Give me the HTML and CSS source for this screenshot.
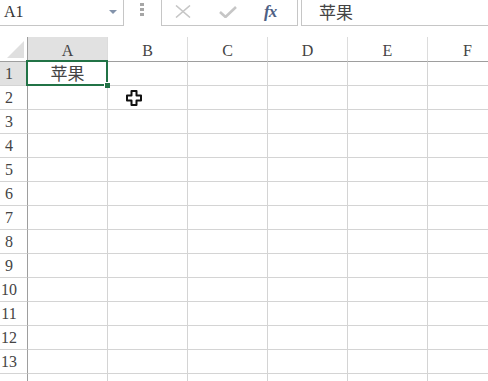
FILE: index.html
```html
<!DOCTYPE html>
<html lang="zh-CN">
  <head>
    <meta charset="UTF-8" />
    <meta name="viewport" content="width=device-width, initial-scale=1.0" />
    <title>Sheet</title>
    <link rel="stylesheet" href="styles.css">
  </head>
  <body>
    <div class="toolbar">
      <div class="namebox">
        <span>A1</span>
        <span class="drop"></span>
      </div>
      <div class="grip">
        <i></i><i></i><i></i>
      </div>
      <div class="fbtns">
        <svg class="ico-x" width="16" height="13" viewBox="0 0 16 13">
          <path d="M1 0.5 L15 12.5 M15 0.5 L1 12.5" stroke="#c6c6c6" stroke-width="1.6" fill="none" />
        </svg>
        <svg class="ico-ok" width="18" height="12" viewBox="0 0 18 12">
          <path d="M1 6 L6.5 11 L17 1" stroke="#c6c6c6" stroke-width="2.6" fill="none" />
        </svg>
        <span class="fx">fx</span>
      </div>
      <div class="finput">苹果</div>
    </div>

    <div class="sheet">
      <div class="corner">
        <svg width="17" height="17" viewBox="0 0 17 17"><path d="M17 0 L17 17 L0 17 Z" fill="#dfdfdf" /></svg>
      </div>
      <div class="colhead on">A</div>
      <div class="colhead">B</div>
      <div class="colhead">C</div>
      <div class="colhead">D</div>
      <div class="colhead">E</div>
      <div class="colhead">F</div>

      <div class="rowhead on">1</div>
      <div class="cell active">苹果<span class="handle"></span></div>
      <div class="cell"></div><div class="cell"></div><div class="cell"></div><div class="cell"></div><div class="cell"></div>

      <div class="rowhead">2</div>
      <div class="cell"></div><div class="cell"></div><div class="cell"></div><div class="cell"></div><div class="cell"></div><div class="cell"></div>
      <div class="rowhead">3</div>
      <div class="cell"></div><div class="cell"></div><div class="cell"></div><div class="cell"></div><div class="cell"></div><div class="cell"></div>
      <div class="rowhead">4</div>
      <div class="cell"></div><div class="cell"></div><div class="cell"></div><div class="cell"></div><div class="cell"></div><div class="cell"></div>
      <div class="rowhead">5</div>
      <div class="cell"></div><div class="cell"></div><div class="cell"></div><div class="cell"></div><div class="cell"></div><div class="cell"></div>
      <div class="rowhead">6</div>
      <div class="cell"></div><div class="cell"></div><div class="cell"></div><div class="cell"></div><div class="cell"></div><div class="cell"></div>
      <div class="rowhead">7</div>
      <div class="cell"></div><div class="cell"></div><div class="cell"></div><div class="cell"></div><div class="cell"></div><div class="cell"></div>
      <div class="rowhead">8</div>
      <div class="cell"></div><div class="cell"></div><div class="cell"></div><div class="cell"></div><div class="cell"></div><div class="cell"></div>
      <div class="rowhead">9</div>
      <div class="cell"></div><div class="cell"></div><div class="cell"></div><div class="cell"></div><div class="cell"></div><div class="cell"></div>
      <div class="rowhead">10</div>
      <div class="cell"></div><div class="cell"></div><div class="cell"></div><div class="cell"></div><div class="cell"></div><div class="cell"></div>
      <div class="rowhead">11</div>
      <div class="cell"></div><div class="cell"></div><div class="cell"></div><div class="cell"></div><div class="cell"></div><div class="cell"></div>
      <div class="rowhead">12</div>
      <div class="cell"></div><div class="cell"></div><div class="cell"></div><div class="cell"></div><div class="cell"></div><div class="cell"></div>
      <div class="rowhead">13</div>
      <div class="cell"></div><div class="cell"></div><div class="cell"></div><div class="cell"></div><div class="cell"></div><div class="cell"></div>
      <!-- row 14 is cut off by the window edge -->
      <div class="rowhead"></div>
      <div class="cell"></div><div class="cell"></div><div class="cell"></div><div class="cell"></div><div class="cell"></div><div class="cell"></div>
    </div>

    <!-- mouse pointer over the sheet -->
    <svg class="pointer" width="16" height="16" viewBox="0 0 16 16">
      <path d="M5.5 1 H10.5 V5.5 H15 V10.5 H10.5 V15 H5.5 V10.5 H1 V5.5 H5.5 Z" fill="#fff" stroke="#111" stroke-width="2" stroke-linejoin="round" />
    </svg>
  </body>
</html>
```

FILE: styles.css
```css
* {
  margin: 0;
  padding: 0;
  box-sizing: border-box;
}
body {
  width: 488px;
  height: 381px;
  overflow: hidden;
  background: #fff;
  font-family: "Liberation Serif", "Noto Sans CJK SC", serif;
  color: #444;
  position: relative;
}

/* formula bar */
.toolbar {
  display: flex;
  align-items: flex-start;
  height: 37px;
}
.namebox {
  width: 124px;
  height: 26px;
  border-right: 1px solid #c6c6c6;
  border-bottom: 1px solid #c6c6c6;
  display: flex;
  align-items: center;
  justify-content: space-between;
  padding: 0 6px 1px 4px;
  font-size: 16px;
  color: #333;
}
.drop {
  width: 0;
  height: 0;
  border-left: 4px solid transparent;
  border-right: 4px solid transparent;
  border-top: 4px solid #8393ab;
}
.grip {
  width: 37px;
  height: 26px;
  display: flex;
  flex-direction: column;
  align-items: center;
  gap: 2px;
  padding-top: 3px;
  padding-right: 1px;
}
.grip i {
  display: block;
  width: 4px;
  height: 3px;
  background: #a6a6a6;
}
.fbtns {
  width: 137px;
  height: 26px;
  border: 1px solid #c6c6c6;
  border-top: none;
  display: flex;
  align-items: center;
  padding: 0 0 2px 13px;
}
.ico-x {
  margin-right: 28px;
}
.ico-ok {
  margin-right: 27px;
  margin-top: 1px;
}
.fx {
  font-family: "Liberation Serif", serif;
  font-style: italic;
  font-weight: bold;
  font-size: 17px;
  color: #4e6084;
  letter-spacing: -1px;
}
.finput {
  flex: 1;
  height: 26px;
  margin-left: 3px;
  border-left: 1px solid #c6c6c6;
  border-bottom: 1px solid #c6c6c6;
  padding: 1px 0 0 17px;
  font-family: "Noto Sans CJK SC", sans-serif;
  font-size: 17px;
  line-height: 22px;
  color: #444;
}

/* sheet */
.sheet {
  display: grid;
  grid-template-columns: 28px repeat(6, 80px);
  grid-template-rows: 25px;
  grid-auto-rows: 24px;
  width: 508px;
}
.corner {
  border-right: 1px solid #9e9e9e;
  border-bottom: 1px solid #9e9e9e;
  display: flex;
  align-items: flex-end;
  justify-content: flex-end;
  padding: 0 3px 3px 0;
}
.colhead {
  border-right: 1px solid #dcdcdc;
  border-bottom: 1px solid #9e9e9e;
  text-align: center;
  font-size: 16px;
  line-height: 18px;
  padding-top: 5px;
  color: #444;
}
.rowhead {
  border-right: 1px solid #9e9e9e;
  border-bottom: 1px solid #d4d4d4;
  text-align: center;
  padding: 3px 9px 0 0;
  font-size: 16px;
  line-height: 18px;
  color: #444;
}
.on {
  background: #e1e1e1;
}
.cell {
  border-right: 1px solid #d4d4d4;
  border-bottom: 1px solid #d4d4d4;
  position: relative;
}
.active {
  text-align: center;
  font-family: "Noto Sans CJK SC", sans-serif;
  font-size: 17px;
  line-height: 22px;
  color: #444;
}
.active::after {
  content: "";
  position: absolute;
  left: -2px;
  top: -2px;
  right: -1px;
  bottom: -1px;
  border: 2px solid #217346;
}
.handle {
  position: absolute;
  right: -3px;
  bottom: -3px;
  width: 6px;
  height: 6px;
  background: #217346;
  border-top: 1px solid #fff;
  border-left: 1px solid #fff;
  z-index: 2;
}
.pointer {
  position: absolute;
  left: 126px;
  top: 90px;
}
```
